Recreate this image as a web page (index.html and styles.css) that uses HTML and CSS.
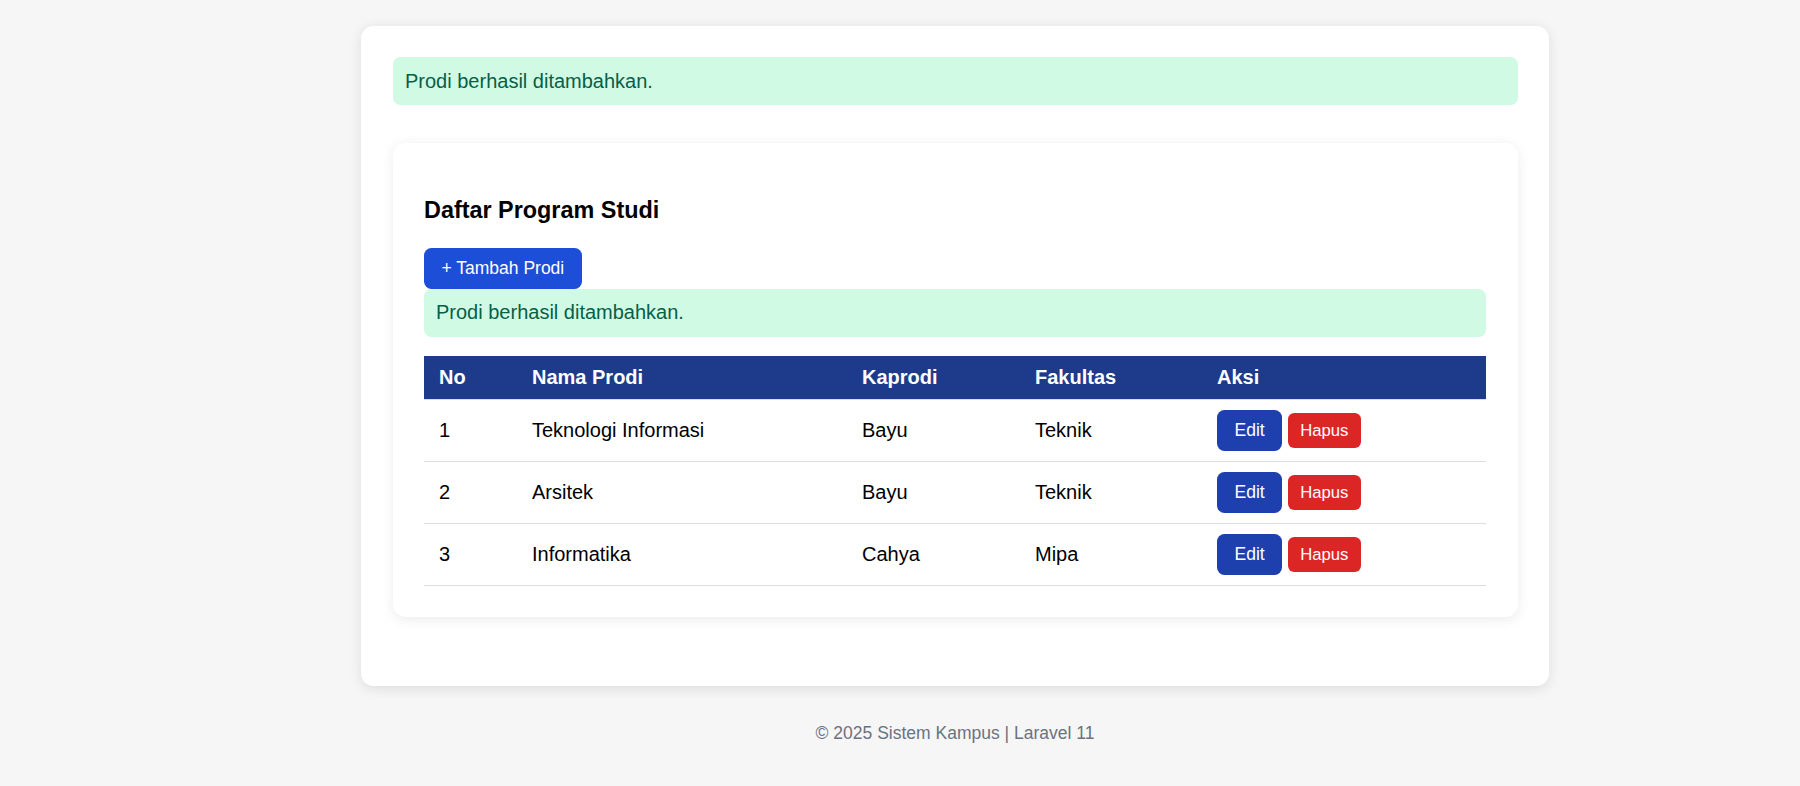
FILE: index.html
```html
<!DOCTYPE html>
<html lang="id">
<head>
<meta charset="utf-8">
<title>Sistem Kampus</title>
<link rel="stylesheet" href="styles.css">
</head>
<body>
<main class="container">
  <div class="alert alert-top">Prodi berhasil ditambahkan.</div>
  <section class="card">
    <h3 class="title">Daftar Program Studi</h3>
    <a class="btn btn-add">+ Tambah Prodi</a>
    <div class="alert">Prodi berhasil ditambahkan.</div>
    <table class="table">
      <colgroup><col class="c-no"><col class="c-nama"><col class="c-kaprodi"><col class="c-fakultas"><col></colgroup>
      <thead>
        <tr><th>No</th><th>Nama Prodi</th><th>Kaprodi</th><th>Fakultas</th><th>Aksi</th></tr>
      </thead>
      <tbody>
        <tr><td>1</td><td>Teknologi Informasi</td><td>Bayu</td><td>Teknik</td><td><div class="actions"><a class="btn btn-edit">Edit</a><button class="btn-delete">Hapus</button></div></td></tr>
        <tr><td>2</td><td>Arsitek</td><td>Bayu</td><td>Teknik</td><td><div class="actions"><a class="btn btn-edit">Edit</a><button class="btn-delete">Hapus</button></div></td></tr>
        <tr><td>3</td><td>Informatika</td><td>Cahya</td><td>Mipa</td><td><div class="actions"><a class="btn btn-edit">Edit</a><button class="btn-delete">Hapus</button></div></td></tr>
      </tbody>
    </table>
  </section>
</main>
<footer class="footer">© 2025 Sistem Kampus | Laravel 11</footer>
</body>
</html>
```
FILE: styles.css
```css
* { box-sizing: border-box; }
body {
  margin: 0;
  height: 786px;
  overflow: hidden;
  background: #f6f6f6;
  color: #000;
  font: 20px/23px "Liberation Sans", Arial, sans-serif;
}
.container {
  width: 1188px;
  height: 660px;
  margin: 26px 0 0 361px;
  padding: 31px 31px 0 32px;
  background: #fff;
  border-radius: 12.5px;
  box-shadow: 0 2.5px 12.5px rgba(0, 0, 0, 0.1);
}
.alert {
  height: 48px;
  padding: 12px;
  border-radius: 7.5px;
  background: #d1fae5;
  color: #065f46;
}
.alert-top { padding-top: 13px; }
.card {
  height: 474px;
  margin-top: 38px;
  padding: 54px 32px 0 31px;
  border-radius: 12.5px;
  background: #fff;
  box-shadow: 0 2.5px 12.5px rgba(0, 0, 0, 0.08);
}
.title {
  margin: 0 0 24px;
  font-size: 23.4px;
  line-height: 27px;
}
.btn {
  display: block;
  width: fit-content;
  height: 41px;
  padding: 0 17.5px;
  border-radius: 7.5px;
  color: #fff;
  font-size: 17.5px;
  line-height: 40px;
}
.btn-add { background: #1d4ed8; }
.btn-edit { background: #1e40af; }
.btn-delete {
  height: 35px;
  padding: 0 13px 0 12px;
  border: 0;
  border-radius: 6.25px;
  background: #dc2626;
  color: #fff;
  font: 16.67px/35px "Liberation Sans", Arial, sans-serif;
}
.table {
  width: 1062px;
  margin-top: 19px;
  border-collapse: separate;
  border-spacing: 0;
  table-layout: fixed;
}
.c-no { width: 93px; }
.c-nama { width: 330px; }
.c-kaprodi { width: 173px; }
.c-fakultas { width: 182px; }
.table th, .table td {
  padding: 0 15px;
  border-bottom: 1px solid #ddd;
  text-align: left;
}
.table th {
  height: 44px;
  background: #1e3a8a;
  background-clip: padding-box;
  color: #fff;
}
.table td { height: 62px; }
.actions {
  display: flex;
  align-items: center;
  gap: 6px;
}
.footer {
  width: 1188px;
  margin: 36px 0 0 361px;
  color: #6b7280;
  font-size: 17.5px;
  text-align: center;
}
```
